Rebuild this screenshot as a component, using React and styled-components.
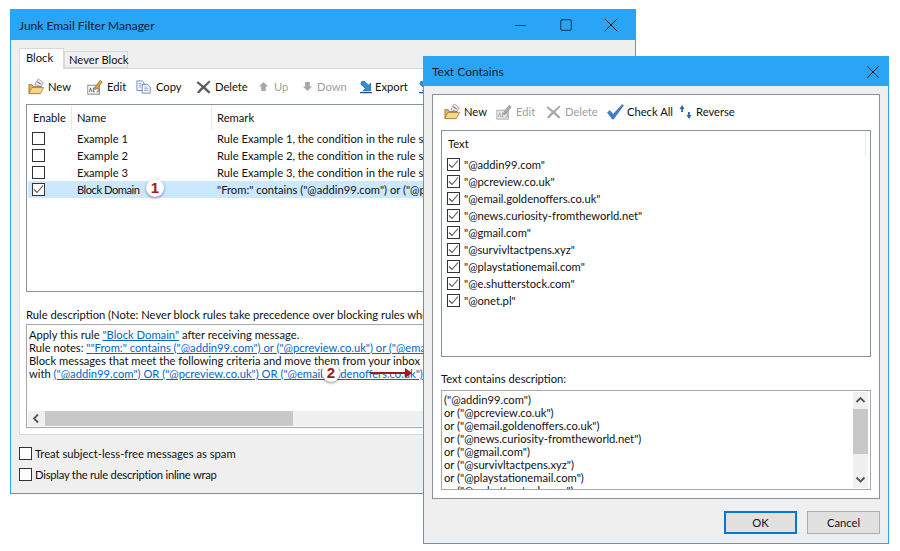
import React from "react";
import styled, { createGlobalStyle } from "styled-components";
import { Minus, Square, X } from "lucide-react";

const GlobalStyle = createGlobalStyle`
  html, body {
    margin: 0;
    padding: 0;
    background: #fff;
  }
  body {
    width: 900px;
    height: 551px;
    overflow: hidden;
    font-family: "Lato", "Noto Sans", sans-serif;
    font-size: 11.2px;
    color: #111;
  }
`;

const FolderIcon = () => (
  <svg width="17" height="17" viewBox="0 0 20 18" preserveAspectRatio="none">
    <path d="M8 7 L12 1 L18 5 L15 9 Z" fill="#eef2fa" stroke="#7d8798" strokeWidth="0.8" />
    <path d="M11 4 L15 6.5" stroke="#c2485a" strokeWidth="1.2" />
    <path d="M1 7 L1 16.5 L14 16.5 L15.5 9 L6 9 L5 7 Z" fill="#e3b45c" stroke="#8d6c32" strokeWidth="0.8" />
    <path d="M1.2 16.5 L4.5 10 L18.5 10 L14.5 16.5 Z" fill="#f7d785" stroke="#9a7838" strokeWidth="0.8" />
  </svg>
);

const EditIcon = ({ off }) => (
  <svg width="16" height="16" viewBox="0 0 20 18" preserveAspectRatio="none">
    <rect x="1" y="7" width="14.5" height="10" fill={off ? "#e6e6e6" : "#fff"} stroke={off ? "#a8a8a8" : "#777"} strokeWidth="1" />
    <path d="M3 14.5 L4.5 10 L6 14.5 M8 10 V14.5 H10 M8 10 H10 M12 10 H14 V14.5 H12" fill="none" stroke={off ? "#a0a0a0" : "#555"} strokeWidth="1" />
    <path d="M10 9 L16.5 1.5 L19 3.5 L12.5 11 L9.5 12 Z" fill={off ? "#a8a8a8" : "#e2a23c"} stroke={off ? "#999" : "#8a5a20"} strokeWidth="0.7" />
  </svg>
);

const CopyIcon = () => (
  <svg width="16" height="14" viewBox="0 0 18 16" preserveAspectRatio="none">
    <path d="M1 1 H7 L9 3 V12 H1 Z" fill="#f4f7fd" stroke="#5a7ab8" strokeWidth="0.9" />
    <path d="M7 5 H13 L16 8 V15 H7 Z" fill="#fff" stroke="#4a6cb0" strokeWidth="0.9" />
    <path d="M3 4 H6 M3 6 H6 M3 8 H6 M9 8 H13 M9 10 H14 M9 12 H14" stroke="#6d8cc8" strokeWidth="0.8" />
  </svg>
);

const DeleteIcon = ({ off }) => (
  <svg width="15" height="14" viewBox="0 0 16 16" preserveAspectRatio="none">
    <path d="M2 1.5 L8 6.5 L14 0.5 L15.5 2 L10 8 L15.5 14 L13.5 15.5 L8 10 L3 15.5 L1 14 L6 8 L0.5 3 Z" fill={off ? "#a9a9a9" : "#5a5a5a"} />
  </svg>
);

const ArrowIcon = ({ down }) => (
  <svg width="11" height="11" viewBox="0 0 12 12" style={{ transform: down ? "rotate(180deg)" : "none" }}>
    <path d="M6 1 L11 6 H8.5 V11 H3.5 V6 H1 Z" fill="#a8a8a8" />
  </svg>
);

const ExportIcon = () => (
  <svg width="14" height="14" viewBox="0 0 15 15">
    <path d="M3 1.5 L6 1.5 L10 5.5 L12.5 3.5 L12.5 11.5 L4.5 11.5 L7 9 L2 4.5 Z" fill="#2f8fdc" stroke="#1c5f9f" strokeWidth="0.8" />
    <path d="M1 13.5 H14" stroke="#254f80" strokeWidth="1.4" />
  </svg>
);

const CheckAllIcon = () => (
  <svg width="17" height="16" viewBox="0 0 18 17" preserveAspectRatio="none">
    <path d="M0.5 9 L3 7 L6.5 11 L16 0.5 L17.5 1.5 L7 16 L5.5 16 Z" fill="#3f7fd0" stroke="#27609f" strokeWidth="0.5" />
  </svg>
);

const ReverseIcon = () => (
  <svg width="14" height="16" viewBox="0 0 14 16">
    <path d="M3 1 L5.5 5 H4 V8 H2.2 V5 H0.5 Z" fill="#2c62b8" />
    <path d="M10 15 L7.5 11 H9 V8 H10.8 V11 H12.5 Z" fill="#2c62b8" />
  </svg>
);

const Tick = () => (
  <svg width="11" height="11" viewBox="0 0 11 11">
    <path d="M1 5.5 L4 8.5 L10 1.5" fill="none" stroke="#555" strokeWidth="1.1" />
  </svg>
);

const Desk = styled.div`
  position: relative;
  width: 900px;
  height: 551px;
  overflow: hidden;
`;

const Win = styled.div`
  position: absolute;
  left: ${(p) => p.$x}px;
  top: ${(p) => p.$y}px;
  width: ${(p) => p.$w}px;
  height: ${(p) => p.$h}px;
  box-sizing: border-box;
  border: 1px solid #2aa4f4;
  background: #efefef;
  display: flex;
  flex-direction: column;
  overflow: hidden;
`;

const TitleBar = styled.div`
  flex: none;
  height: ${(p) => p.$h}px;
  background: #2aa4f4;
  display: flex;
  align-items: center;
  padding: 0 ${(p) => p.$pr ?? 0}px 0 8px;
  font-size: 12px;
  color: #10202c;
`;

const TitleText = styled.div`
  flex: 1;
`;

const TitleBtn = styled.div`
  width: ${(p) => p.$w ?? 45}px;
  height: 29px;
  display: flex;
  align-items: center;
  justify-content: center;
  color: #111;
`;

const MainBody = styled.div`
  flex: 1;
  min-height: 0;
  padding: 8px 8px 0;
  display: flex;
  flex-direction: column;
`;

const Tabs = styled.div`
  display: flex;
  align-items: flex-end;
  height: 20px;
  flex: none;
`;

const Tab = styled.div`
  box-sizing: border-box;
  width: ${(p) => p.$w}px;
  height: ${(p) => (p.$on ? 21 : 17)}px;
  margin-bottom: ${(p) => (p.$on ? -1 : 0)}px;
  position: relative;
  z-index: ${(p) => (p.$on ? 1 : 0)};
  border: 1px solid #d9d9d9;
  border-bottom: ${(p) => (p.$on ? "none" : "1px solid #d9d9d9")};
  background: ${(p) => (p.$on ? "#fff" : "#f0f0f0")};
  padding-left: ${(p) => (p.$on ? 6 : 4)}px;
  line-height: ${(p) => (p.$on ? 18 : 16)}px;
  white-space: nowrap;
`;

const TabPanel = styled.div`
  box-sizing: border-box;
  width: 700px;
  height: 367px;
  flex: none;
  background: #fff;
  border: 1px solid #d9d9d9;
  padding: 0 6px;
`;

const Toolbar = styled.div`
  display: flex;
  align-items: center;
  height: 35px;
  white-space: nowrap;
  padding-left: ${(p) => p.$pl ?? 2}px;
  padding-bottom: ${(p) => p.$pb ?? 0}px;
  box-sizing: border-box;
`;

const ToolItem = styled.div`
  flex: none;
  width: ${(p) => p.$w}px;
  display: flex;
  align-items: center;
  gap: ${(p) => p.$gap ?? 3}px;
  color: ${(p) => (p.$off ? "#a0a0a0" : "#111")};
`;

const ListBox = styled.div`
  box-sizing: border-box;
  width: 680px;
  height: 188px;
  border: 1px solid #8a9299;
  overflow: hidden;
`;

const HeadRow = styled.div`
  display: flex;
  height: 25px;
  align-items: center;
`;

const HeadCell = styled.div`
  box-sizing: border-box;
  width: ${(p) => p.$w}px;
  height: 24px;
  line-height: 24px;
  padding-left: ${(p) => p.$pad}px;
  border-right: 1px solid #e8e8e8;
`;

const RuleRow = styled.div`
  display: flex;
  align-items: center;
  height: 17px;
  margin-left: 1px;
  white-space: nowrap;
  background: ${(p) => (p.$sel ? "#cce8ff" : "transparent")};
`;

const CheckBox = styled.span`
  box-sizing: border-box;
  flex: none;
  width: 13px;
  height: 13px;
  border: 1px solid #333;
  background: #fff;
  display: flex;
  align-items: center;
  justify-content: center;
`;

const CheckCell = styled.div`
  width: 44px;
  padding-left: 4px;
  box-sizing: border-box;
  flex: none;
`;

const NameCell = styled.div`
  width: 145px;
  flex: none;
  padding-left: 5px;
  box-sizing: border-box;
  letter-spacing: ${(p) => (p.$tight ? "-0.5px" : "0")};
`;

const Badge = styled.span`
  position: absolute;
  left: ${(p) => p.$x}px;
  top: ${(p) => p.$y}px;
  width: 18px;
  height: 18px;
  border-radius: 50%;
  background: #fff;
  box-shadow: 0 1px 3px rgba(0, 0, 0, 0.45);
  color: #a3171f;
  font: bold 15px "Liberation Sans", sans-serif;
  line-height: 18px;
  text-align: center;
`;

const DescLabel = styled.div`
  margin-top: 14px;
  height: 18px;
  line-height: 18px;
  white-space: nowrap;
`;

const DescBox = styled.div`
  box-sizing: border-box;
  width: 680px;
  height: 104px;
  border: 1px solid #a8a8a8;
  position: relative;
  padding: 3px 1px 0 2px;
  line-height: 13px;
  white-space: nowrap;
  overflow: hidden;
`;

const DescLink = styled.span`
  color: #0066cc;
  text-decoration: underline;
`;

const HScroll = styled.div`
  position: absolute;
  left: 1px;
  right: 0;
  bottom: 1px;
  height: 15px;
  background: #f0f0f0;
  display: flex;
  align-items: center;
`;

const ScrollBtn = styled.div`
  flex: none;
  width: ${(p) => p.$w ?? 16}px;
  height: ${(p) => p.$h ?? 15}px;
  display: flex;
  align-items: center;
  justify-content: center;
`;

const HThumb = styled.div`
  width: 248px;
  height: 15px;
  background: #c8c8c8;
`;

const OptionRow = styled.div`
  display: flex;
  align-items: center;
  gap: 3px;
  height: 21px;
  white-space: nowrap;
`;

const OptionText = styled.span`
  letter-spacing: ${(p) => (p.$tight ? "-0.22px" : "0")};
`;

const Options = styled.div`
  padding-top: 8px;
`;

const ArrowMark = styled.svg`
  position: absolute;
  left: 360px;
  top: 364px;
`;

const DlgBody = styled.div`
  flex: 1;
  min-height: 0;
  display: flex;
  flex-direction: column;
  padding: 8px 8px 0;
`;

const DlgPanel = styled.div`
  box-sizing: border-box;
  height: 405px;
  flex: none;
  background: #fff;
  border: 1px solid #8a9299;
  padding: 0 8px;
`;

const TextList = styled.div`
  box-sizing: border-box;
  height: 227px;
  border: 1px solid #8a9299;
  position: relative;
  padding-left: 5px;
`;

const TextHead = styled.div`
  height: 25px;
  line-height: 25px;
  padding-left: 1px;
`;

const HeadEdge = styled.div`
  position: absolute;
  top: 1px;
  right: 4px;
  width: 1px;
  height: 24px;
  background: #e8e8e8;
`;

const TextRow = styled.div`
  display: flex;
  align-items: center;
  gap: 4px;
  height: 17px;
  white-space: nowrap;
`;

const SmallLabel = styled.div`
  height: 33px;
  line-height: 18px;
  padding-top: 13px;
  box-sizing: border-box;
`;

const TextArea = styled.div`
  box-sizing: border-box;
  height: 100px;
  border: 1px solid #a8a8a8;
  position: relative;
  overflow: hidden;
  padding: 2px 0 0 2px;
  line-height: 13px;
  white-space: nowrap;
`;

const VScroll = styled.div`
  position: absolute;
  right: 2px;
  top: 1px;
  bottom: 1px;
  width: 15px;
  background: #f0f0f0;
  display: flex;
  flex-direction: column;
  align-items: center;
`;

const VThumb = styled.div`
  width: 15px;
  height: 45px;
  flex: none;
  background: #c8c8c8;
`;

const VGap = styled.div`
  flex: 1;
`;

const BtnRow = styled.div`
  display: flex;
  justify-content: flex-end;
  gap: 10px;
  padding-top: 12px;
`;

const Btn = styled.div`
  box-sizing: border-box;
  width: ${(p) => p.$w}px;
  height: 23px;
  background: #e1e1e1;
  border: ${(p) => (p.$main ? "2px solid #0078d7" : "1px solid #adadad")};
  display: flex;
  align-items: center;
  justify-content: center;
`;

const Chevron = ({ dir }) => {
  const d = { left: "M7 1.5 L3 5.5 L7 9.5", up: "M1.5 7 L5.5 3 L9.5 7", down: "M1.5 3.5 L5.5 7.5 L9.5 3.5" }[dir];
  return (
    <svg width="11" height="11" viewBox="0 0 11 11">
      <path d={d} fill="none" stroke="#555" strokeWidth="1.8" />
    </svg>
  );
};

const rules = ["Example 1", "Example 2", "Example 3"];
const domains = [
  "@addin99.com",
  "@pcreview.co.uk",
  "@email.goldenoffers.co.uk",
  "@news.curiosity-fromtheworld.net",
  "@gmail.com",
  "@survivltactpens.xyz",
  "@playstationemail.com",
  "@e.shutterstock.com",
  "@onet.pl",
];

export default function App() {
  return (
    <Desk>
      <GlobalStyle />
      <Win $x={10} $y={9} $w={626} $h={485}>
        <TitleBar $h={30} $pr={2}>
          <TitleText>Junk Email Filter Manager</TitleText>
          <TitleBtn><Minus size={17} strokeWidth={1} /></TitleBtn>
          <TitleBtn><Square size={14} strokeWidth={1.3} /></TitleBtn>
          <TitleBtn><X size={24} strokeWidth={1} /></TitleBtn>
        </TitleBar>
        <MainBody>
          <Tabs>
            <Tab $on $w={45}>Block</Tab>
            <Tab $w={64}>Never Block</Tab>
          </Tabs>
          <TabPanel>
            <Toolbar>
              <ToolItem $w={59}><FolderIcon />New</ToolItem>
              <ToolItem $w={49} $gap={4}><EditIcon />Edit</ToolItem>
              <ToolItem $w={60} $gap={4}><CopyIcon />Copy</ToolItem>
              <ToolItem $w={62} $gap={4}><DeleteIcon />Delete</ToolItem>
              <ToolItem $w={44} $off $gap={5}><ArrowIcon />Up</ToolItem>
              <ToolItem $w={57} $off $gap={4}><ArrowIcon down />Down</ToolItem>
              <ToolItem $w={59} $gap={2}><ExportIcon />Export</ToolItem>
              <ToolItem $w={60}><ExportIcon />Import</ToolItem>
            </Toolbar>
            <ListBox>
              <HeadRow>
                <HeadCell $w={45} $pad={6}>Enable</HeadCell>
                <HeadCell $w={140} $pad={5}>Name</HeadCell>
                <HeadCell $w={400} $pad={5}>Remark</HeadCell>
              </HeadRow>
              {rules.map((r, i) => (
                <RuleRow key={r}>
                  <CheckCell><CheckBox /></CheckCell>
                  <NameCell>{r}</NameCell>
                  <div>Rule Example {i + 1}, the condition in the rule subject or body contains text</div>
                </RuleRow>
              ))}
              <RuleRow $sel>
                <CheckCell><CheckBox><Tick /></CheckBox></CheckCell>
                <NameCell $tight>Block Domain</NameCell>
                <div>"From:" contains ("@addin99.com") or ("@pcreview.co.uk") or ("@email</div>
              </RuleRow>
            </ListBox>
            <DescLabel>Rule description (Note: Never block rules take precedence over blocking rules when processing)</DescLabel>
            <DescBox>
              <div>Apply this rule <DescLink>"Block Domain"</DescLink> after receiving message.</div>
              <div>Rule notes: <DescLink>""From:" contains ("@addin99.com") or ("@pcreview.co.uk") or ("@email.goldenoffers.co.uk")</DescLink></div>
              <div>Block messages that meet the following criteria and move them from your inbox to the junk folder</div>
              <div>with <DescLink>("@addin99.com") OR ("@pcreview.co.uk") OR ("@email.goldenoffers.co.uk") OR ("@gmail.com")</DescLink></div>
              <HScroll>
                <ScrollBtn $w={17}><Chevron dir="left" /></ScrollBtn>
                <HThumb />
              </HScroll>
            </DescBox>
          </TabPanel>
          <Options>
            <OptionRow><CheckBox /><OptionText>Treat subject-less-free messages as spam</OptionText></OptionRow>
            <OptionRow><CheckBox /><OptionText $tight>Display the rule description inline wrap</OptionText></OptionRow>
          </Options>
        </MainBody>
      </Win>
      <Badge $x={146} $y={179}>1</Badge>
      <Badge $x={322} $y={364}>2</Badge>
      <ArrowMark width="52" height="18" viewBox="0 0 52 18">
        <path d="M10 9 H46" stroke="#a3171f" strokeWidth="2" />
        <path d="M45 4 L52 9 L45 14 Z" fill="#a3171f" />
      </ArrowMark>

      <Win $x={423} $y={56} $w={466} $h={488}>
        <TitleBar $h={29}>
          <TitleText>Text Contains</TitleText>
          <TitleBtn $w={30}><X size={22} strokeWidth={1} /></TitleBtn>
        </TitleBar>
        <DlgBody>
          <DlgPanel>
            <Toolbar $pl={3} $pb={2}>
              <ToolItem $w={52}><FolderIcon />New</ToolItem>
              <ToolItem $w={50} $off $gap={4}><EditIcon off />Edit</ToolItem>
              <ToolItem $w={61} $off $gap={4}><DeleteIcon off />Delete</ToolItem>
              <ToolItem $w={72} $gap={3}><CheckAllIcon />Check All</ToolItem>
              <ToolItem $w={70} $gap={3}><ReverseIcon />Reverse</ToolItem>
            </Toolbar>
            <TextList>
              <TextHead>Text</TextHead>
              <HeadEdge />
              {domains.map((d) => (
                <TextRow key={d}>
                  <CheckBox><Tick /></CheckBox>
                  <span>"{d}"</span>
                </TextRow>
              ))}
            </TextList>
            <SmallLabel>Text contains description:</SmallLabel>
            <TextArea>
              {domains.slice(0, 8).map((d, i) => (
                <div key={d}>{i === 0 ? `("${d}")` : `or ("${d}")`}</div>
              ))}
              <VScroll>
                <ScrollBtn $w={15} $h={17}><Chevron dir="up" /></ScrollBtn>
                <VThumb />
                <VGap />
                <ScrollBtn $w={15} $h={17}><Chevron dir="down" /></ScrollBtn>
              </VScroll>
            </TextArea>
          </DlgPanel>
          <BtnRow>
            <Btn $main $w={73}>OK</Btn>
            <Btn $w={73}>Cancel</Btn>
          </BtnRow>
        </DlgBody>
      </Win>
    </Desk>
  );
}
